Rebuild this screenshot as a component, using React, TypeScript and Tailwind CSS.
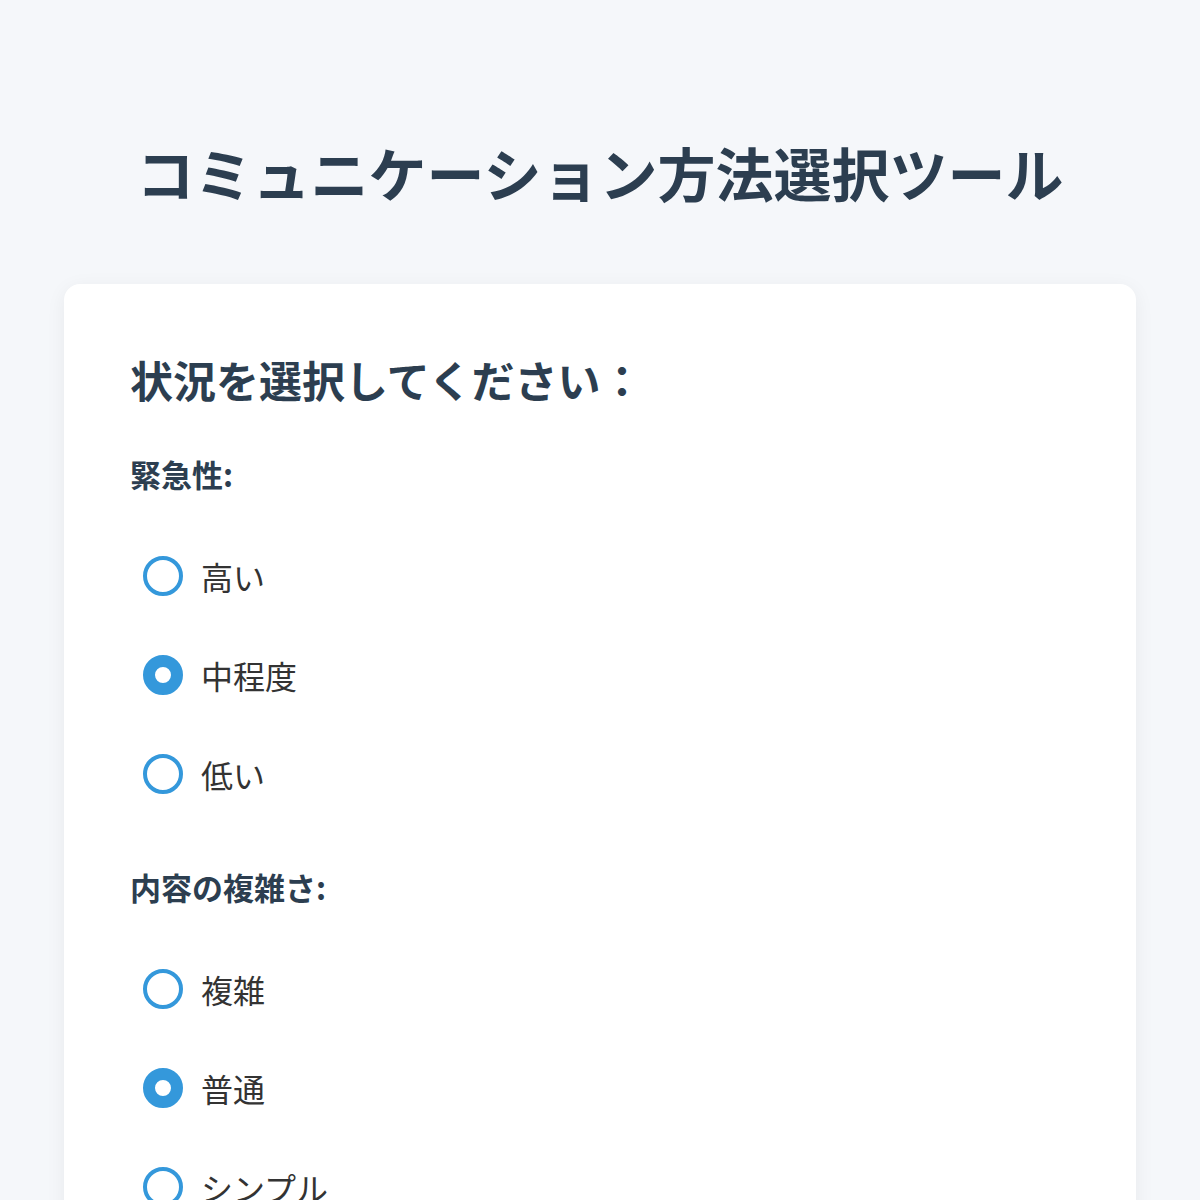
import { useState } from 'react'

// ─── Data ─────────────────────────────────────────────────────────────────────

interface Group {
  key: string
  label: string
  options: string[]
  defaultValue: string
  topGap: string
}

const GROUPS: Group[] = [
  { key: 'urgency', label: '緊急性:', options: ['高い', '中程度', '低い'], defaultValue: '中程度', topGap: 'mt-[50px]' },
  { key: 'complexity', label: '内容の複雑さ:', options: ['複雑', '普通', 'シンプル'], defaultValue: '普通', topGap: 'mt-[44px]' },
]

const FONT = { fontFamily: '"Noto Sans CJK JP", "Noto Sans", sans-serif' }

// ─── Radio row ────────────────────────────────────────────────────────────────

function RadioRow({ label, checked, onSelect }: { label: string; checked: boolean; onSelect: () => void }) {
  return (
    <button type="button" onClick={onSelect} className="flex h-[99px] w-full items-center pl-[13px] text-left">
      <span
        className={
          checked
            ? 'box-border h-[40px] w-[40px] shrink-0 rounded-full border-[12px] border-[#3498db] bg-white'
            : 'box-border h-[40px] w-[40px] shrink-0 rounded-full border-[4px] border-[#3498db] bg-white'
        }
      />
      <span className="ml-[18px] text-[32px] leading-[40px] text-[#333333]">{label}</span>
    </button>
  )
}

// ─── App ──────────────────────────────────────────────────────────────────────

export default function App() {
  const [values, setValues] = useState<Record<string, string>>(
    Object.fromEntries(GROUPS.map((g) => [g.key, g.defaultValue])),
  )

  return (
    <div className="min-h-screen bg-[#f5f7fa] px-16 pt-[137px] pb-16" style={FONT}>
      <h1 className="text-center text-[58px] font-bold leading-[70px] text-[#2c3e50]">
        コミュニケーション方法選択ツール
      </h1>

      <div className="mt-[77px] rounded-2xl bg-white px-[66px] pt-[70px] pb-16 shadow-[0_4px_20px_rgba(0,0,0,0.06)]">
        <h2 className="text-[43px] font-bold leading-[50px] text-[#2c3e50]">状況を選択してください：</h2>

        {GROUPS.map((g) => (
          <div key={g.key} className={g.topGap}>
            <p className="h-[40px] text-[31px] font-bold leading-[40px] text-[#2c3e50]">{g.label}</p>
            <div className="mt-[32px]">
              {g.options.map((o) => (
                <RadioRow
                  key={o}
                  label={o}
                  checked={values[g.key] === o}
                  onSelect={() => setValues((v) => ({ ...v, [g.key]: o }))}
                />
              ))}
            </div>
          </div>
        ))}
      </div>
    </div>
  )
}
